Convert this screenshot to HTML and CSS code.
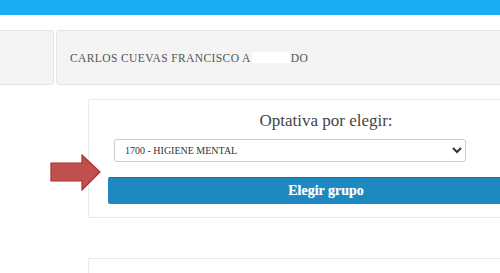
FILE: index.html
```html
<!DOCTYPE html>
<html lang="es">
<head>
    <meta charset="UTF-8">
    <meta name="viewport" content="width=device-width, initial-scale=1.0">
    <title>Optativas</title>
    <link rel="stylesheet" href="styles.css">
</head>
<body>
    <div class="topbar"></div>

    <div class="student-row">
        <div class="cell cell-small"></div>
        <div class="cell cell-name">
            CARLOS CUEVAS FRANCISCO A<span class="redact"></span>DO
        </div>
    </div>

    <div class="content">
        <svg class="arrow" width="52" height="38" viewBox="0 0 52 38">
            <polygon points="1,9 32,9 32,1 50,18 32,36 32,27 1,27" fill="#c0504d" stroke="#a8302c" stroke-width="1.2"/>
        </svg>

        <div class="card">
            <h3 class="card-title">Optativa por elegir:</h3>
            <select class="select">
                <option>1700 - HIGIENE MENTAL</option>
            </select>
            <button class="button">Elegir grupo</button>
        </div>

        <div class="card card-next"></div>
    </div>
</body>
</html>
```

FILE: styles.css
```css
html, body {
    overflow: hidden;
}

body {
    margin: 0;
    font-family: "Liberation Serif", "Times New Roman", serif;
    background: #fff;
    color: #333;
}

.topbar {
    height: 15px;
    background: #1aaef5;
}

.student-row {
    display: flex;
    gap: 2px;
    margin: 15px 0 0 -6px;
    width: 530px;
}

.cell {
    background: #f4f4f4;
    border: 1px solid #e4e4e4;
    border-radius: 3px;
    box-sizing: border-box;
    height: 55px;
}

.cell-small {
    width: 60px;
    flex-shrink: 0;
}

.cell-name {
    flex: 1;
    display: flex;
    align-items: center;
    padding-left: 13px;
    font-size: 11.5px;
    color: #555;
    letter-spacing: 0.4px;
}

.redact {
    display: inline-block;
    width: 38px;
    height: 11px;
    background: #fff;
    margin: 0 1px;
}

.content {
    position: relative;
    padding-top: 14px;
}

.arrow {
    position: absolute;
    left: 50px;
    top: 69px;
}

.card {
    margin-left: 88px;
    width: 476px;
    box-sizing: border-box;
    border: 1px solid #e8e8e8;
    border-radius: 2px;
    padding: 12px 19px 13px 19px;
}

.card-title {
    margin: 0 0 9px 0;
    text-align: center;
    font-weight: normal;
    font-size: 17px;
    color: #444;
    line-height: 18px;
}

.select {
    display: block;
    width: 352px;
    height: 23px;
    margin: 0 0 15px 6px;
    padding: 0 6px;
    font-family: "Liberation Serif", "Times New Roman", serif;
    font-size: 10px;
    color: #333;
    background: #fff;
    border: 1px solid #ccc;
    border-radius: 3px;
}

.button {
    display: block;
    width: 100%;
    height: 27px;
    background: #1e88c0;
    border: none;
    border-top: 1px solid #1673a6;
    border-radius: 2px;
    color: #fff;
    font-family: "Liberation Serif", "Times New Roman", serif;
    font-weight: bold;
    font-size: 14px;
    text-shadow: 0 0 1px rgba(255, 255, 255, 0.4);
    cursor: pointer;
}

.card-next {
    margin-top: 40px;
    height: 40px;
    padding: 0;
}
```
